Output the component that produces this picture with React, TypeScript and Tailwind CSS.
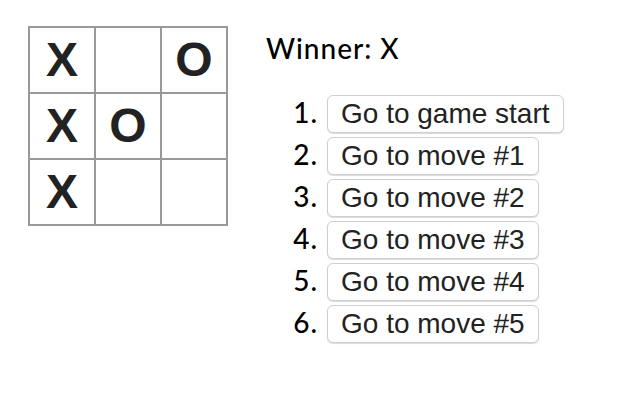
import React from "react";

const board = ["X", null, "O", "X", "O", null, "X", null, null];
const moves = [
  "Go to game start",
  "Go to move #1",
  "Go to move #2",
  "Go to move #3",
  "Go to move #4",
  "Go to move #5",
];

export default function App() {
  return (
    <div className="w-[642px] h-[412px] bg-white flex items-start pt-[26px] pl-[28px]">
      <div className="grid grid-cols-[repeat(3,66px)] border-t-2 border-l-2 border-[#999]">
        {board.map((v, i) => (
          <div
            key={i}
            className="w-[66px] h-[66px] border-r-2 border-b-2 border-[#999] bg-white flex items-center justify-center text-[48px] font-bold text-[#222] leading-none"
            style={{ fontFamily: '"Liberation Sans", Arial, sans-serif' }}
          >
            {v}
          </div>
        ))}
      </div>
      <div
        className="ml-[38px] text-black font-medium"
        style={{ fontFamily: 'Lato, "Open Sans", sans-serif' }}
      >
        <div className="mt-[8px] h-[28px] text-[28px] leading-[28px] tracking-[1px]">Winner: X</div>
        <ol className="mt-[33px] flex flex-col gap-[4px]">
          {moves.map((m, i) => (
            <li key={i} className="flex items-baseline gap-[9px] h-[38px]">
              <span className="w-[52px] text-right text-[28px] leading-[28px] tracking-[1px]">{i + 1}.</span>
              <button
                className="h-[38px] px-[13px] bg-white border border-[#cfcfcf] rounded-[6px] shadow-[0_1px_1px_rgba(0,0,0,0.15)] text-[28px] text-[#222] leading-[36px] font-normal"
                style={{ fontFamily: '"Liberation Sans", Arial, sans-serif' }}
              >
                {m}
              </button>
            </li>
          ))}
        </ol>
      </div>
    </div>
  );
}
